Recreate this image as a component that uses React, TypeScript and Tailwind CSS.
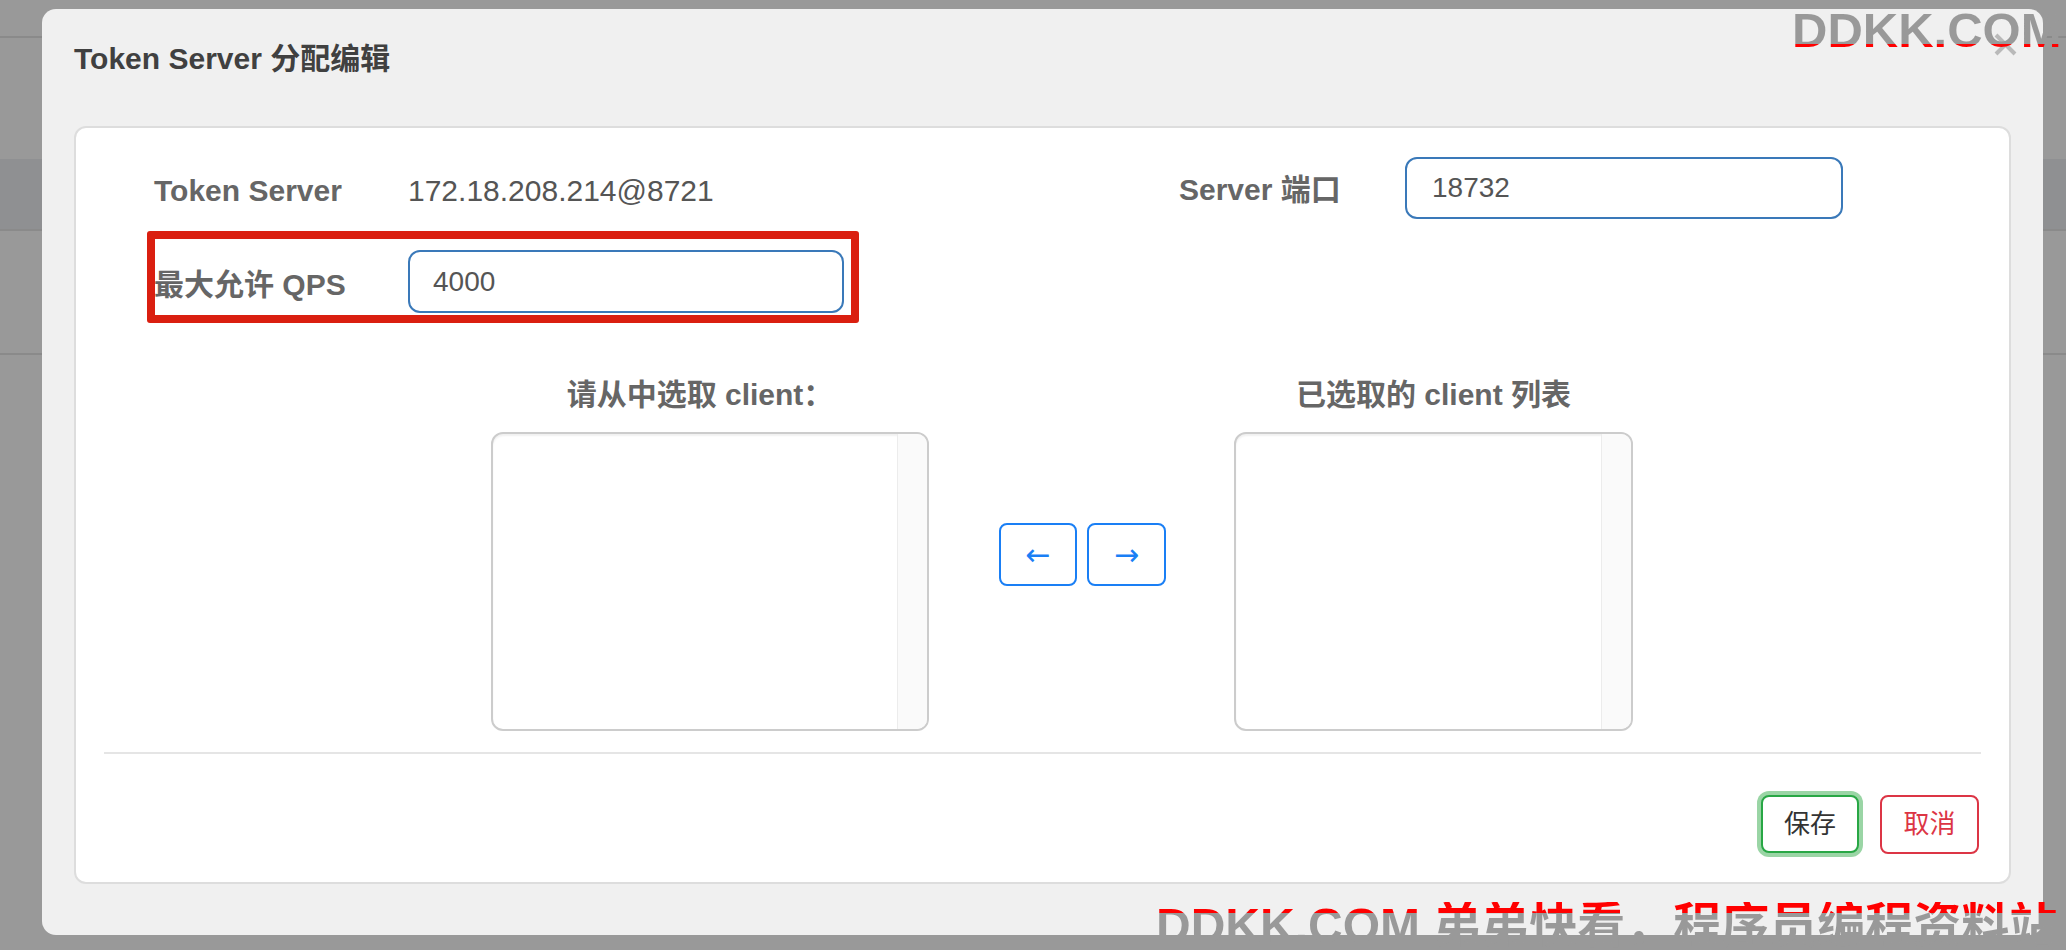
import React from 'react';

const font = "font-['Liberation_Sans','Noto_Sans_CJK_SC',sans-serif]";

function ClientList({ width }: { width: string }) {
  return (
    <div className={`${width} h-[299px] flex border-2 border-[#cccccc] rounded-[12px] overflow-hidden bg-white shadow-[inset_0_2px_2px_rgba(0,0,0,0.06)]`}>
      <div className="flex-1" />
      <div className="w-[30px] bg-[#fafafa] border-l border-[#ececec]" />
    </div>
  );
}

export default function App() {
  return (
    <div className={`relative w-full h-[950px] overflow-hidden bg-[#999999] ${font}`}>
      {/* page behind the overlay */}
      <div className="h-[36px]" />
      <div className="h-[2px] bg-[#8a8a8a]" />
      <div className="h-[121px]" />
      <div className="h-[70px] bg-[#8f9092]" />
      <div className="h-[2px] bg-[#8a8a8a]" />
      <div className="h-[122px]" />
      <div className="h-[2px] bg-[#8a8a8a]" />

      {/* modal */}
      <div className="absolute left-[42px] top-[9px] w-[2001px] h-[926px] bg-[#f0f0f0] rounded-[14px] px-[32px]">
        <div className="h-[117px] pt-[29px]">
          <h4 className="text-[30px] leading-[42px] font-bold text-[#404040]">Token Server 分配编辑</h4>
        </div>
        <svg className="absolute left-[1951px] top-[23px]" width="25" height="25" viewBox="0 0 25 25">
          <path d="M3 3L22 22M22 3L3 22" stroke="#b9b9b9" strokeWidth="4" />
        </svg>

        <div className="relative h-[758px] bg-white border-2 border-[#dddddd] rounded-[12px]">
          {/* top form rows */}
          <div className="pl-[78px]">
            <div className="mt-[29px] h-[62px] grid grid-cols-[254px_771px_226px_438px] items-center text-[30px]">
              <div className="font-bold text-[#666666] pt-[5px]">Token Server</div>
              <div className="text-[#555555] pt-[5px]">172.18.208.214@8721</div>
              <div className="font-bold text-[#666666] pt-[3px]">Server 端口</div>
              <input
                readOnly
                defaultValue="18732"
                className="w-[438px] h-[62px] border-2 border-[#3a79b9] rounded-[12px] pl-[25px] text-[28px] text-[#555555] bg-white outline-none"
              />
            </div>
            <div className="mt-[31px] h-[63px] grid grid-cols-[254px_436px] items-center text-[30px]">
              <div className="font-bold text-[#666666] pt-[6px]">最大允许 QPS</div>
              <input
                readOnly
                defaultValue="4000"
                className="w-[436px] h-[63px] border-2 border-[#3a79b9] rounded-[12px] pl-[23px] text-[28px] text-[#555555] bg-white outline-none"
              />
            </div>
          </div>

          {/* annotation box */}
          <div className="absolute left-[71px] top-[103px] w-[712px] h-[92px] border-[8px] border-[#da1f10] rounded-[3px]" />

          {/* client transfer */}
          <div className="mt-[61px] pl-[415px] flex">
            <div className="w-[438px] flex flex-col">
              <div className="h-[42px] leading-[42px] text-[30px] font-bold text-[#666666] text-center pr-[20px]">请从中选取 client：</div>
              <div className="mt-[16px]">
                <ClientList width="w-[438px]" />
              </div>
            </div>
            <div className="ml-[70px] pt-[149px] flex gap-[10px]">
              <button className="w-[78px] h-[63px] border-2 border-[#1a7ff5] rounded-[8px] text-[#1a7ff5] text-[30px] leading-none bg-white font-['DejaVu_Sans',sans-serif]">←</button>
              <button className="w-[79px] h-[63px] border-2 border-[#1a7ff5] rounded-[8px] text-[#1a7ff5] text-[30px] leading-none bg-white font-['DejaVu_Sans',sans-serif]">→</button>
            </div>
            <div className="ml-[68px] w-[399px] flex flex-col">
              <div className="h-[42px] leading-[42px] text-[30px] font-bold text-[#666666] text-center">已选取的 client 列表</div>
              <div className="mt-[16px]">
                <ClientList width="w-[399px]" />
              </div>
            </div>
          </div>

          <div className="mt-[21px] mx-[28px] h-[2px] bg-[#e5e5e5]" />

          <div className="mt-[41px] pr-[30px] flex justify-end gap-[21px]">
            <button className="w-[98px] h-[58px] border-2 border-[#28a745] rounded-[8px] ring-4 ring-[#9ad5a5] text-[26px] text-[#333333] bg-white">保存</button>
            <button className="w-[99px] h-[59px] border-2 border-[#dc3545] rounded-[8px] text-[26px] text-[#dc3545] bg-white">取消</button>
          </div>
        </div>
      </div>

      {/* watermarks */}
      <div className="absolute left-[1792px] top-[6px] text-[49px] leading-none font-bold whitespace-nowrap bg-clip-text text-transparent bg-linear-to-b from-[#999999] from-[78%] to-[#ff0000] to-[78%]">
        DDKK.COM
      </div>
      <div className="absolute left-[1156px] top-[902px] text-[48px] leading-none font-bold whitespace-nowrap bg-clip-text text-transparent bg-linear-to-b from-[#ff0000] from-[22%] to-[#999999] to-[22%]">
        DDKK.COM 弟弟快看，程序员编程资料站
      </div>
    </div>
  );
}
